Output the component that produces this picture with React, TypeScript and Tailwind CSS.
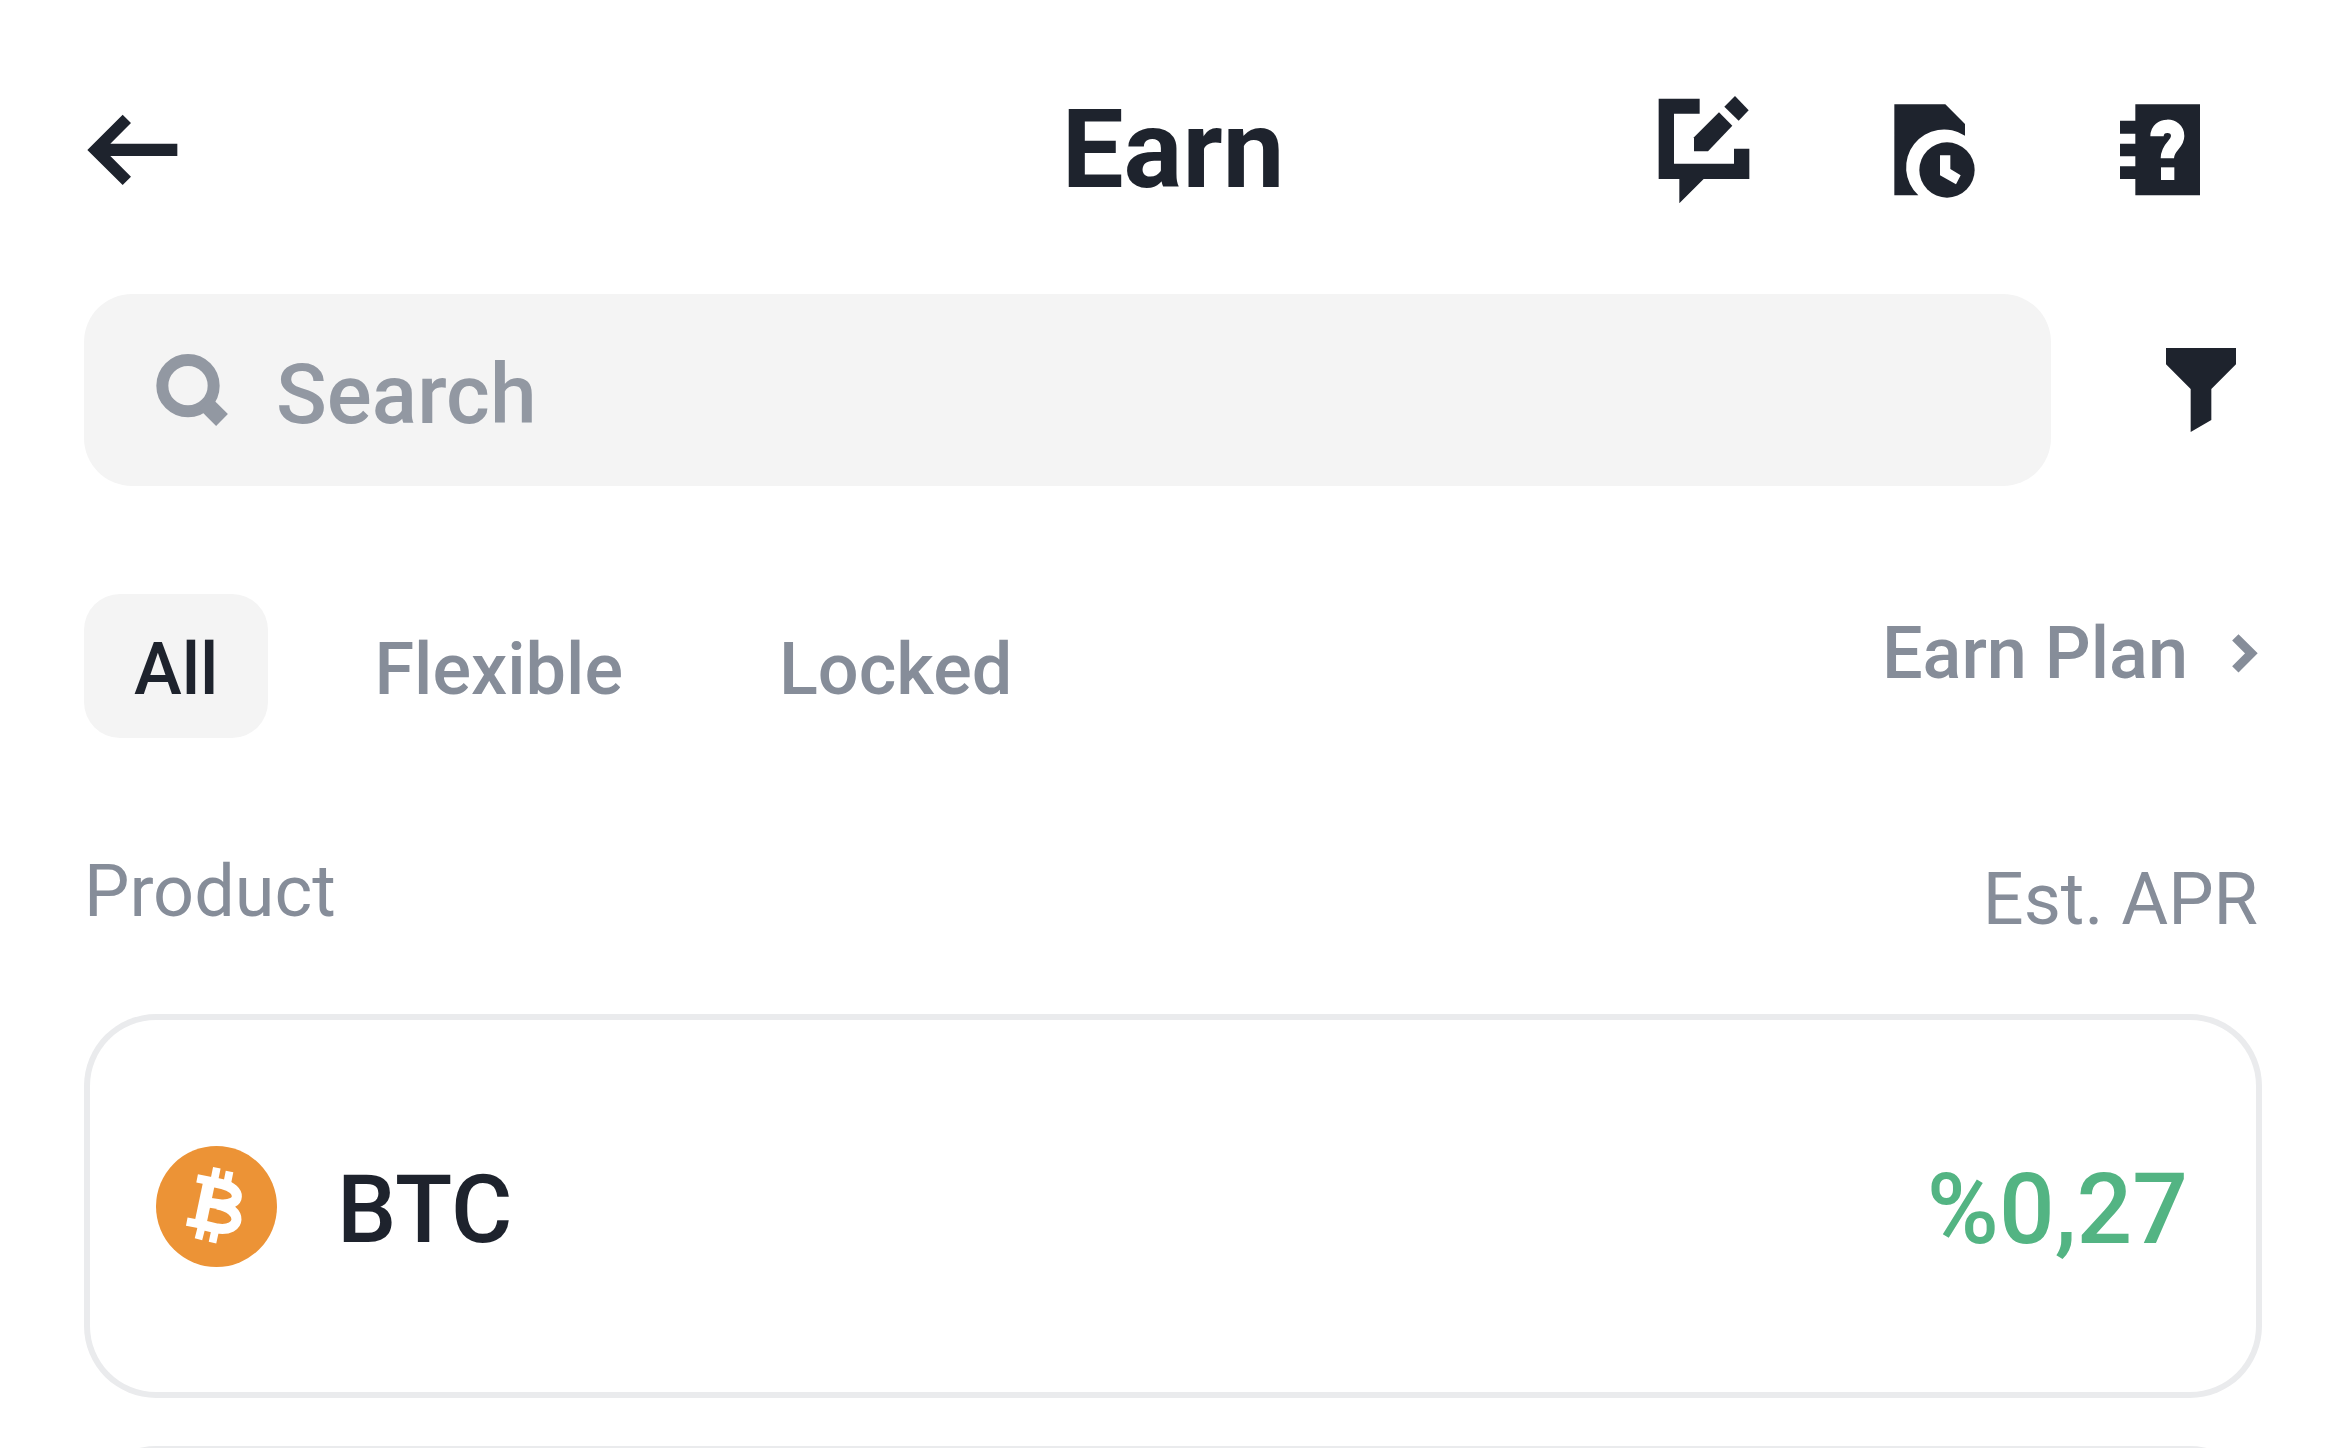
import React from "react";

const tabs = ["All", "Flexible", "Locked"];

function BackIcon() {
  return (
    <svg viewBox="0 0 480 420" className="h-[140px] w-[160px]" fill="#1e232d" aria-hidden="true">
      <path d="M82 210 188 104 213 129 151 191H352V228H151L213 290 188 315Z" />
    </svg>
  );
}

function FeedbackIcon() {
  return (
    <svg viewBox="0 0 390 420" className="h-[140px] w-[130px]" fill="#1e232d" aria-hidden="true">
      <path d="M56 56H179V101H102V251H282V206H328V297H191L118 370V297H56Z" />
      <path d="M237 97 277 137 204 214H162V172Z" />
      <path d="M285 48 326 91 296 122 253 80Z" />
    </svg>
  );
}

function HistoryIcon() {
  return (
    <svg viewBox="0 0 390 420" className="h-[140px] w-[130px]" fill="#1e232d" aria-hidden="true">
      <path d="M73 73H226L285 132V167A114 114 0 0 0 145 346H73Z" />
      <circle cx="231" cy="270" r="83" />
      <path d="M210 226H241V267L272 286 258 313 210 286Z" fill="#fff" />
    </svg>
  );
}

function GuideIcon() {
  return (
    <svg viewBox="0 0 390 420" className="h-[140px] w-[130px]" aria-hidden="true">
      <path
        fill="#1e232d"
        d="M106 73H300V346H106V297H60V259H106V229H60V191H106V161H60V122H106Z"
      />
      <path
        d="M171 169C171 129 233 129 233 168C233 196 202 198 202 235"
        fill="none"
        stroke="#fff"
        strokeWidth="40"
      />
      <path d="M183 262H223V300H183Z" fill="#fff" />
    </svg>
  );
}

function SearchIcon() {
  return (
    <svg viewBox="0 0 216 216" className="size-[72px] shrink-0" fill="none" stroke="#9298a2" aria-hidden="true">
      <circle cx="96" cy="95" r="77" strokeWidth="36" />
      <path d="M148 148 198 198" strokeWidth="50" />
    </svg>
  );
}

function FilterIcon() {
  return (
    <svg viewBox="0 0 210 252" className="h-[84px] w-[70px]" fill="#1e232d" aria-hidden="true">
      <path d="M0 0H210V49L136 123V216L74 252V123L0 49Z" />
    </svg>
  );
}

function ChevronIcon() {
  return (
    <svg viewBox="0 0 78 120" className="h-[40px] w-[26px]" fill="none" stroke="#868d99" strokeWidth="27" aria-hidden="true">
      <path d="M10 10 58 58 10 106" />
    </svg>
  );
}

function BitcoinIcon() {
  return (
    <svg viewBox="257 436 362 362" className="size-[121px] shrink-0" aria-hidden="true">
      <circle cx="438" cy="617" r="181" fill="#ec9336" />
      <g fill="none" stroke="#fff">
        <path strokeWidth="36" d="M417 540 390 668" />
        <path
          strokeWidth="25"
          d="M380 533 440 545M349 662 400 672"
        />
        <path
          strokeWidth="30"
          d="M425 543 455 550C515 564 513 614 452 611L405 604M440 611C520 624 514 694 440 683L385 670"
        />
        <path strokeWidth="23" d="M439 501 430 545M477 512 469 553M394 676 384 715M435 684 426 725" />
      </g>
    </svg>
  );
}

export default function App() {
  return (
    <main className="h-screen overflow-hidden bg-white pt-20 font-['Roboto',sans-serif] text-[#1e232d]">
      <header className="grid grid-cols-[1fr_auto_1fr] items-center px-[60px]">
        <button type="button" aria-label="Back" className="justify-self-start">
          <BackIcon />
        </button>
        <h1 className="text-[110px] leading-[140px] font-bold">Earn</h1>
        <nav className="flex gap-[100px] justify-self-end pr-14" aria-label="Tools">
          <button type="button" aria-label="Feedback">
            <FeedbackIcon />
          </button>
          <button type="button" aria-label="History">
            <HistoryIcon />
          </button>
          <button type="button" aria-label="Guide">
            <GuideIcon />
          </button>
        </nav>
      </header>

      <div className="px-[84px]">
        <div className="mt-[74px] flex items-center pr-[26px]">
          <label className="flex h-48 flex-1 items-center gap-12 rounded-[48px] bg-[#f4f4f4] px-[72px]">
            <SearchIcon />
            <input
              type="text"
              aria-label="Search"
              placeholder="Search"
              className="h-32 w-full min-w-0 bg-transparent pt-2 text-[84px] leading-[112px] font-medium outline-none placeholder:text-[#9298a2] placeholder:opacity-100"
            />
          </label>
          <button type="button" aria-label="Filter" className="ml-[115px]">
            <FilterIcon />
          </button>
        </div>

        <div className="mt-[108px] flex items-start justify-between text-[72px] font-medium">
          <div className="flex gap-14" role="tablist">
            {tabs.map((tab, i) => (
              <button
                key={tab}
                type="button"
                role="tab"
                aria-selected={i === 0}
                className={
                  i === 0
                    ? "h-36 rounded-[36px] bg-[#f4f4f4] px-[50px] pt-2"
                    : "h-36 px-[50px] pt-2 text-[#868d99]"
                }
              >
                {tab}
              </button>
            ))}
          </div>
          <a href="#earn-plan" className="flex items-center gap-11 pr-1 leading-[120px] text-[#868d99]">
            Earn Plan
            <ChevronIcon />
          </a>
        </div>

        <table className="mt-14 w-full border-separate border-spacing-x-0 border-spacing-y-12">
          <thead>
            <tr className="h-[124px] align-top text-[72px] leading-[100px] text-[#868d99]">
              <th scope="col" className="text-left font-normal">
                Product
              </th>
              <th scope="col" className="pt-2 pr-1 text-right font-normal">
                Est. APR
              </th>
            </tr>
          </thead>
          <tbody>
            <tr className="h-96">
              <td className="rounded-l-[72px] border-6 border-r-0 border-[#eaebed] pl-[66px]">
                <div className="flex items-center gap-[60px]">
                  <BitcoinIcon />
                  <span className="pt-2 text-[94px] leading-[112px] font-medium">BTC</span>
                </div>
              </td>
              <td className="rounded-r-[72px] border-6 border-l-0 border-[#eaebed] pr-[68px] text-right">
                <div className="pt-2 text-[98px] leading-[112px] font-medium text-[#53b483]">%0,27</div>
              </td>
            </tr>
            <tr className="h-96">
              <td className="rounded-l-[72px] border-6 border-r-0 border-[#eaebed]" />
              <td className="rounded-r-[72px] border-6 border-l-0 border-[#eaebed]" />
            </tr>
          </tbody>
        </table>
      </div>
    </main>
  );
}
